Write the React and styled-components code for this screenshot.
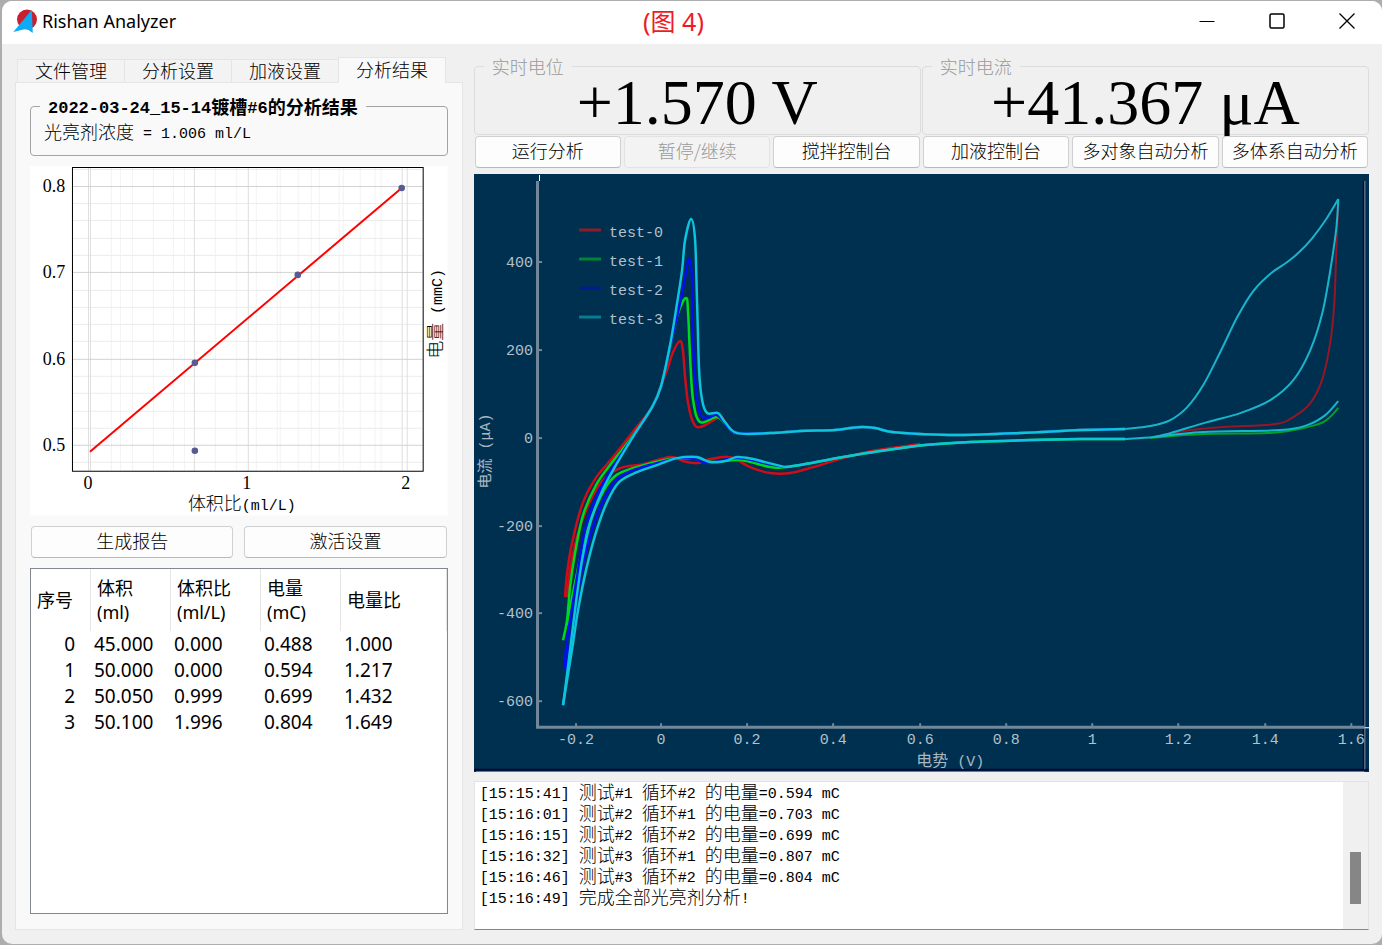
import React, { useState } from 'react';
import styled, { createGlobalStyle, css } from 'styled-components';

const GlobalStyle = createGlobalStyle`
  * {
    box-sizing: border-box;
  }

  body {
    margin: 0;
    background-color: #adadad;
    color: #000;
    font-family: 'Noto Sans CJK SC', sans-serif;
    font-size: 18px;
    font-weight: 300;
  }

  button {
    font: inherit;
  }
`;

const Desktop = styled.div`
  display: flex;
  min-height: 100vh;
  padding: 1px 0 1px 2px;
`;

const Window = styled.div`
  display: flex;
  flex: 1;
  flex-direction: column;
  min-width: 0;
  border-radius: 10px;
  background-color: #f0f0f0;
  overflow: hidden;
`;

const TitleBar = styled.header`
  display: grid;
  grid-template-columns: 1fr auto 1fr;
  align-items: center;
  height: 43px;
  padding: 0 0 3px 11px;
  background-color: #fff;
`;

const AppName = styled.h1`
  display: flex;
  align-items: center;
  gap: 4px;
  margin: 0;
  font-family: 'Noto Sans', sans-serif;
  font-size: 18px;
  font-weight: 400;
`;

const FigureLabel = styled.span`
  margin-right: 48px;
  color: #ed1c24;
  font-family: 'Noto Sans', 'Noto Sans CJK SC', sans-serif;
  font-size: 25px;
  font-weight: 400;
  line-height: 36px;
`;

const WindowButtons = styled.div`
  display: flex;
  justify-content: flex-end;
`;

const WindowButton = styled.button`
  display: flex;
  justify-content: center;
  align-items: center;
  width: 70px;
  height: 40px;
  padding: 0;
  border: none;
  background: none;
`;

const Main = styled.main`
  display: grid;
  flex: 1;
  grid-template-columns: minmax(0, 1fr) minmax(0, 2fr);
  gap: 11px;
  padding: 13px 13px 14px;
`;

const Column = styled.div`
  display: flex;
  flex-direction: column;
  min-width: 0;
`;

const Tabs = styled.div`
  display: flex;
  align-items: flex-end;
  padding-left: 2px;
`;

const Tab = styled.button`
  height: 23px;
  padding: 0 17px 2px;
  border: 1px solid #e5e5e5;
  border-right: none;
  border-bottom: none;
  background-color: #f3f3f3;
  line-height: 20px;
  white-space: nowrap;

  ${(props) =>
    props.$active &&
    css`
      z-index: 1;
      height: 26px;
      margin-bottom: -1px;
      padding-bottom: 4px;
      border-right: 1px solid #e5e5e5;
      background-color: #f9f9f9;
    `}
`;

const TabPanel = styled.section`
  display: flex;
  flex: 1;
  flex-direction: column;
  gap: 10px;
  padding: 11px 14px 15px;
  border: 1px solid #e5e5e5;
  background-color: #f9f9f9;
`;

/* 半角字符宽度为汉字的一半 */
const Half = styled.span`
  font-family: 'Liberation Mono', monospace;
  font-size: 15px;
  line-height: 1;
  vertical-align: 1px;
  white-space: pre;
`;

const ResultBox = styled.fieldset`
  min-width: 0;
  margin: 0;
  padding: 1px 13px 12px;
  border: 1px solid #a3a3a3;
  border-radius: 4px;
  line-height: 24px;
`;

const ResultTitle = styled.legend`
  margin-left: -4px;
  padding: 0 8px;
  font-weight: 700;
  white-space: nowrap;

  ${Half} {
    font-size: 17px;
  }
`;

const Chart = styled.svg`
  display: block;
  width: 100%;
  height: auto;

  text {
    font-family: 'Noto Sans CJK SC', sans-serif;
    text-anchor: middle;
  }

  .num {
    font-family: 'Liberation Serif', serif;
  }

  .half {
    font-family: 'Liberation Mono', monospace;
    font-size: 15px;
  }

  .end {
    text-anchor: end;
  }
`;

const ButtonRow = styled.div`
  display: grid;
  grid-template-columns: repeat(${(props) => props.$count}, minmax(0, 1fr));
  gap: ${(props) => props.$gap}px;
  padding: 0 1px;
`;

const PushButton = styled.button`
  height: 32px;
  padding: 0 0 4px;
  border: 1px solid #d0d0d0;
  border-bottom-color: #b8b8b8;
  border-radius: 4px;
  background-color: #fdfdfd;
  color: #000;
  line-height: 26px;
  white-space: nowrap;

  &:disabled {
    border-color: #e2e2e2;
    background-color: #f3f3f3;
    color: #9a9a9a;
  }
`;

const TableFrame = styled.div`
  flex: 1;
  border: 1px solid #828790;
  background-color: #fff;
`;

const Table = styled.table`
  width: 100%;
  border-collapse: separate;
  border-spacing: 0;
  table-layout: fixed;
  font-family: 'Noto Sans', 'Noto Sans CJK SC', sans-serif;
  font-weight: 400;
`;

const HeadCell = styled.th`
  width: ${(props) => props.$width};
  height: 62px;
  padding: 0 0 0 6px;
  border-right: 1px solid #e5e5e5;
  font-size: 18px;
  font-weight: 400;
  line-height: 24px;
  text-align: left;
  white-space: pre-line;
`;

const Cell = styled.td`
  height: 26px;
  padding: 0 0 0 3px;
  font-size: 19px;
  line-height: 26px;

  &:first-child {
    padding-right: 16px;
    text-align: right;
  }
`;

const Readings = styled.div`
  display: grid;
  grid-template-columns: repeat(2, minmax(0, 1fr));
  gap: 1px;
  margin-bottom: 1px;
`;

const ReadingBox = styled.fieldset`
  min-width: 0;
  margin: 0;
  padding: 0 0 3px;
  border: 1px solid #dcdcdc;
  border-radius: 4px;
`;

const ReadingTitle = styled.legend`
  margin-left: 9px;
  padding: 0 8px;
  color: #9a9a9a;
  line-height: 18px;
`;

const ReadingValue = styled.output`
  display: block;
  font-family: 'Liberation Serif', serif;
  font-size: 64px;
  font-weight: 400;
  line-height: 56px;
  text-align: center;
  white-space: nowrap;
`;

const CurveArea = styled.div`
  margin: 6px 0 9px;
`;

const LogBox = styled.div`
  display: flex;
  flex: 1;
  border: 1px solid #e3e3e3;
  border-bottom-color: #868686;
  background-color: #fff;
`;

const LogLines = styled.div`
  flex: 1;
  padding-left: 5px;
`;

const LogLine = styled.p`
  height: 21px;
  margin: 0;
  line-height: 18px;
  white-space: nowrap;
`;

const ScrollTrack = styled.div`
  width: 25px;
  padding: 70px 7px 0;
  background-color: #f0f0f0;
`;

const ScrollThumb = styled.div`
  height: 52px;
  background-color: #868686;
`;

const tabs = ['文件管理', '分析设置', '加液设置', '分析结果'];

const columns = [
  { title: '序号', width: '60px' },
  { title: '体积\n(ml)', width: '80px' },
  { title: '体积比\n(ml/L)', width: '90px' },
  { title: '电量\n(mC)', width: '80px' },
  { title: '电量比', width: 'auto' }
];

const rows = [
  ['0', '45.000', '0.000', '0.488', '1.000'],
  ['1', '50.000', '0.000', '0.594', '1.217'],
  ['2', '50.050', '0.999', '0.699', '1.432'],
  ['3', '50.100', '1.996', '0.804', '1.649']
];

const actions = [
  { label: '运行分析' },
  { label: '暂停/继续', disabled: true },
  { label: '搅拌控制台' },
  { label: '加液控制台' },
  { label: '多对象自动分析' },
  { label: '多体系自动分析' }
];

const logs = [
  '[15:15:41] 测试#1 循环#2 的电量=0.594 mC',
  '[15:16:01] 测试#2 循环#1 的电量=0.703 mC',
  '[15:16:15] 测试#2 循环#2 的电量=0.699 mC',
  '[15:16:32] 测试#3 循环#1 的电量=0.807 mC',
  '[15:16:46] 测试#3 循环#2 的电量=0.804 mC',
  '[15:16:49] 完成全部光亮剂分析!'
];

// 把半角字符和汉字分开显示
const MixedText = ({ children }) =>
  children
    .split(/([\x20-\x7e]+)/)
    .filter(Boolean)
    .map((part, i) => (/[\x20-\x7e]/.test(part) ? <Half key={i}>{part}</Half> : part));

// 经过所有点的平滑曲线
const smooth = (points) => {
  let d = `M${points[0][0]} ${points[0][1]}`;
  for (let i = 0; i < points.length - 1; i++) {
    const p0 = points[i - 1] || points[i];
    const p1 = points[i];
    const p2 = points[i + 1];
    const p3 = points[i + 2] || p2;
    const c1 = [p1[0] + (p2[0] - p0[0]) / 6, p1[1] + (p2[1] - p0[1]) / 6];
    const c2 = [p2[0] - (p3[0] - p1[0]) / 6, p2[1] - (p3[1] - p1[1]) / 6];
    d += `C${c1[0].toFixed(1)} ${c1[1].toFixed(1)} ${c2[0].toFixed(1)} ${c2[1].toFixed(1)} ${p2[0]} ${p2[1]}`;
  }
  return d;
};

const plateau = [[737, 433], [770, 433], [800, 431], [835, 430], [850, 428], [862, 427], [875, 428], [892, 432], [920, 434], [960, 435], [1020, 433], [1080, 430], [1125, 429]];
const oxidation = [[1150, 426], [1170, 420], [1187, 407], [1203, 385], [1220, 352], [1237, 317], [1253, 291], [1271, 273], [1287, 262], [1299, 252], [1312, 238], [1326, 219], [1338, 199]];
const backward = [[1125, 439], [1080, 439], [1030, 440], [970, 442], [925, 445], [880, 451], [843, 457], [800, 465], [785, 467]];

const curves = [
  {
    name: 'test-0',
    color: '#d00c18',
    dim: '#961626',
    legend: '#8a1c2c',
    paths: [
      [[565, 597], [567, 573], [572, 543], [582, 505], [595, 479], [613, 457], [632, 433], [652, 407], [660, 388], [667, 370], [673, 352], [680, 341], [683, 352], [685, 377], [688, 403], [693, 422], [700, 427], [717, 418], [722, 417], [728, 427], ...plateau],
      [[567, 597], [570, 570], [577, 537], [587, 508], [601, 482], [620, 468], [643, 464], [670, 457], [683, 461], [697, 463], [710, 459], [730, 457], [750, 467], [770, 473], [790, 473], [813, 467], [843, 458], [877, 450], [920, 444]]
    ],
    thin: [
      [[1338, 199], [1336, 250], [1334, 303], [1330, 342], [1322, 379], [1310, 403], [1293, 417], [1275, 424], [1223, 427], [1183, 431], [1153, 437]]
    ]
  },
  {
    name: 'test-1',
    color: '#00d81c',
    dim: '#00a028',
    legend: '#008436',
    paths: [
      [[563, 640], [567, 620], [570, 587], [575, 553], [583, 515], [596, 485], [613, 461], [632, 437], [652, 407], [661, 386], [670, 347], [678, 313], [686, 298], [688, 313], [690, 357], [693, 400], [700, 422], [717, 417], [728, 427], ...plateau],
      [[567, 625], [572, 597], [577, 573], [585, 537], [597, 504], [610, 481], [627, 470], [670, 459], [697, 459], [712, 462], [740, 460], [770, 467], ...backward.slice().reverse()]
    ],
    thin: [[[1338, 408], [1323, 422], [1293, 430], [1267, 433], [1203, 434], [1150, 438]]]
  },
  {
    name: 'test-2',
    color: '#0010f0',
    dim: '#0010f0',
    legend: '#001c8c',
    paths: [
      [[564, 670], [567, 640], [570, 620], [577, 577], [585, 530], [598, 493], [616, 462], [634, 435], [652, 407], [661, 386], [670, 347], [680, 303], [685, 277], [689, 259], [692, 280], [693, 343], [696, 390], [700, 413], [707, 418], [717, 415], [728, 427], ...plateau],
      [[566, 670], [571, 637], [577, 598], [583, 563], [592, 530], [603, 501], [616, 480], [633, 470], [657, 463], [680, 458], [695, 459], [708, 463], [737, 458], [765, 463], [785, 467]]
    ],
    thin: []
  },
  {
    name: 'test-3',
    color: '#0cc4dc',
    dim: '#18b4cc',
    legend: '#087c90',
    paths: [
      [[563, 705], [565, 690], [570, 650], [576, 602], [582, 560], [591, 520], [603, 489], [617, 463], [634, 435], [652, 407], [661, 386], [670, 345], [677, 303], [682, 270], [685, 240], [691, 219], [695, 240], [697, 303], [699, 370], [702, 400], [707, 413], [718, 413], [725, 422], ...plateau],
      [[563, 705], [567, 680], [573, 643], [578, 610], [586, 570], [596, 532], [607, 502], [619, 482], [637, 472], [657, 465], [677, 458], [697, 457], [710, 462], [725, 461], [737, 457], [753, 459], [765, 462], [785, 467]],
      backward
    ],
    thin: [
      [[1125, 429], ...oxidation],
      [[1338, 199], [1336, 228], [1330, 270], [1322, 313], [1310, 350], [1293, 380], [1270, 400], [1240, 413], [1207, 422], [1170, 433], [1153, 437], [1125, 439]],
      [[1338, 401], [1325, 415], [1307, 425], [1280, 430], [1203, 432], [1153, 437]]
    ]
  }
];

const xTicks = [['-0.2', 576], ['0', 661], ['0.2', 747], ['0.4', 833], ['0.6', 920], ['0.8', 1006], ['1', 1092], ['1.2', 1178], ['1.4', 1265], ['1.6', 1351]];
const yTicks = [['400', 262], ['200', 350], ['0', 438], ['-200', 526], ['-400', 613], ['-600', 701]];

const VoltammetryChart = () => (
  <Chart viewBox="474 174 895 598" role="img" aria-label="电流-电势曲线">
    <rect x="474" y="174" width="895" height="598" fill="#00304f" />
    <path d="M474 769.5H1368M1363.5 181V769" stroke="#00083a" strokeWidth="2" />
    <path d="M1364.5 181V769M476 771.5H1364" stroke="#8294a4" />
    <path d="M539.5 175V181M1364 727.5H1369" stroke="#fff" />
    <path d="M537.5 181V727H1364" fill="none" stroke="#71889a" strokeWidth="3" />
    <g stroke="#71889a" strokeWidth="2">
      {xTicks.map(([label, x]) => (
        <path key={label} d={`M${x} 723V727`} />
      ))}
      {yTicks.map(([label, y]) => (
        <path key={label} d={`M537 ${y}H542`} />
      ))}
    </g>
    <g fill="#b4c0ca">
      {xTicks.map(([label, x]) => (
        <text key={label} className="half" x={x} y="744">
          {label}
        </text>
      ))}
      {yTicks.map(([label, y]) => (
        <text key={label} className="half end" x="533" y={y + 5}>
          {label}
        </text>
      ))}
    </g>
    <text x="950" y="766" fontSize="16" fontWeight="400" fill="#a9b7c2">
      电势<tspan className="half"> (V)</tspan>
    </text>
    <text transform="translate(490 451) rotate(-90)" fontSize="15" fontWeight="400" fill="#a9b7c2">
      电流<tspan className="half"> (μA)</tspan>
    </text>
    {curves.map((curve, i) => (
      <g key={curve.name} fill="none" strokeLinejoin="round">
        <path d={`M579 ${230 + i * 29}H601`} stroke={curve.legend} strokeWidth="3" />
        <text className="half" x="636" y={237 + i * 29} fill="#b4c0ca">
          {curve.name}
        </text>
        {curve.paths.map((points, k) => (
          <path key={k} d={smooth(points)} stroke={curve.color} strokeWidth="2.5" />
        ))}
        {curve.thin.map((points, k) => (
          <path key={k} d={smooth(points)} stroke={curve.dim} strokeWidth="2" />
        ))}
      </g>
    ))}
  </Chart>
);

const fitMinorX = [111.5, 120.5, 132.5, 153.5, 173.5, 184.5, 215.5, 236.5, 256.5, 277.5, 280.5, 298.5, 311.5, 319.5, 339.5, 343.5, 360.5, 375.5, 381.5];
const fitMajorX = [88.5, 90.5, 194.5, 248.5, 402.5, 407.5];
const fitMajorY = [['0.8', 186.5], ['0.7', 272.5], ['0.6', 359.5], ['0.5', 445.5]];
const fitMinorY = [169.5, 203.5, 220.5, 238.5, 255.5, 290.5, 307.5, 324.5, 341.5, 376.5, 393.5, 411.5, 428.5, 462.5];
const fitPoints = [[195, 363], [195, 451], [298, 275], [402, 188]];

const FitChart = () => (
  <Chart viewBox="30 166 418 350" role="img" aria-label="电量与体积比的拟合曲线">
    <rect x="30" y="166" width="418" height="350" fill="#fff" />
    <path d={fitMinorX.map((x) => `M${x} 168V471`).join('')} stroke="#f3f3f3" />
    <path d={fitMinorY.map((y) => `M73 ${y}H423`).join('')} stroke="#ececec" />
    <path d={fitMajorX.map((x) => `M${x} 168V471`).join('')} stroke="#dedede" />
    {fitMajorY.map(([label, y]) => (
      <g key={label}>
        <path d={`M73 ${y}H423`} stroke="#d2d2d2" />
        <text className="num" x="54" y={y + 6} fontSize="18">
          {label}
        </text>
      </g>
    ))}
    <rect x="72.5" y="167.5" width="351" height="304" fill="none" stroke="#000" />
    <path d="M90 452L402 188" stroke="#f00" strokeWidth="2" />
    {fitPoints.map(([x, y]) => (
      <circle key={`${x}-${y}`} cx={x} cy={y} r="3.3" fill="#5a5a92" />
    ))}
    {[['0', 88], ['1', 247], ['2', 406]].map(([label, x]) => (
      <text key={label} className="num" x={x} y="489" fontSize="18">
        {label}
      </text>
    ))}
    <text x="242" y="510" fontSize="18">
      体积比<tspan className="half">(ml/L)</tspan>
    </text>
    <text transform="translate(442 314) rotate(-90)" fontSize="18">
      电量<tspan className="half"> (mmC)</tspan>
    </text>
  </Chart>
);

const Logo = () => (
  <svg width="25" height="25" viewBox="0 0 25 25" aria-hidden="true">
    <circle cx="14" cy="10.5" r="10" fill="#c8202f" />
    <path d="M18.8 0.8L19.8 24L13.5 19.8L0.3 23Z" fill="#0cabf4" />
  </svg>
);

const App = () => {
  const [activeTab, setActiveTab] = useState('分析结果');

  return (
    <Desktop>
      <GlobalStyle />
      <Window>
        <TitleBar>
          <AppName>
            <Logo />
            Rishan Analyzer
          </AppName>
          <FigureLabel>(图 4)</FigureLabel>
          <WindowButtons>
            <WindowButton aria-label="最小化">
              <svg width="16" height="16" fill="none" stroke="#000">
                <path d="M0.5 8.5H15.5" />
              </svg>
            </WindowButton>
            <WindowButton aria-label="最大化">
              <svg width="16" height="16" fill="none" stroke="#000" strokeWidth="1.5">
                <rect x="1" y="1" width="14" height="14" rx="1.5" />
              </svg>
            </WindowButton>
            <WindowButton aria-label="关闭">
              <svg width="16" height="16" fill="none" stroke="#000" strokeWidth="1.3">
                <path d="M0.5 0.5L15.5 15.5M15.5 0.5L0.5 15.5" />
              </svg>
            </WindowButton>
          </WindowButtons>
        </TitleBar>

        <Main>
          <Column>
            <Tabs role="tablist">
              {tabs.map((tab) => (
                <Tab
                  key={tab}
                  role="tab"
                  aria-selected={tab === activeTab}
                  $active={tab === activeTab}
                  onClick={() => setActiveTab(tab)}
                >
                  {tab}
                </Tab>
              ))}
            </Tabs>
            <TabPanel>
              <ResultBox>
                <ResultTitle>
                  <MixedText>2022-03-24_15-14镀槽#6的分析结果</MixedText>
                </ResultTitle>
                <MixedText>光亮剂浓度 = 1.006 ml/L</MixedText>
              </ResultBox>
              <FitChart />
              <ButtonRow $count={2} $gap={11}>
                <PushButton>生成报告</PushButton>
                <PushButton>激活设置</PushButton>
              </ButtonRow>
              <TableFrame>
                <Table>
                  <thead>
                    <tr>
                      {columns.map((column) => (
                        <HeadCell key={column.title} $width={column.width}>
                          {column.title}
                        </HeadCell>
                      ))}
                    </tr>
                  </thead>
                  <tbody>
                    {rows.map((row) => (
                      <tr key={row[0]}>
                        {row.map((value, i) => (
                          <Cell key={i}>{value}</Cell>
                        ))}
                      </tr>
                    ))}
                  </tbody>
                </Table>
              </TableFrame>
            </TabPanel>
          </Column>

          <Column>
            <Readings>
              <ReadingBox>
                <ReadingTitle>实时电位</ReadingTitle>
                <ReadingValue>+1.570 V</ReadingValue>
              </ReadingBox>
              <ReadingBox>
                <ReadingTitle>实时电流</ReadingTitle>
                <ReadingValue>+41.367 μA</ReadingValue>
              </ReadingBox>
            </Readings>
            <ButtonRow $count={6} $gap={3}>
              {actions.map((action) => (
                <PushButton key={action.label} disabled={action.disabled}>
                  {action.label}
                </PushButton>
              ))}
            </ButtonRow>
            <CurveArea>
              <VoltammetryChart />
            </CurveArea>
            <LogBox>
              <LogLines role="log">
                {logs.map((line) => (
                  <LogLine key={line}>
                    <MixedText>{line}</MixedText>
                  </LogLine>
                ))}
              </LogLines>
              <ScrollTrack>
                <ScrollThumb />
              </ScrollTrack>
            </LogBox>
          </Column>
        </Main>
      </Window>
    </Desktop>
  );
};

export default App;
